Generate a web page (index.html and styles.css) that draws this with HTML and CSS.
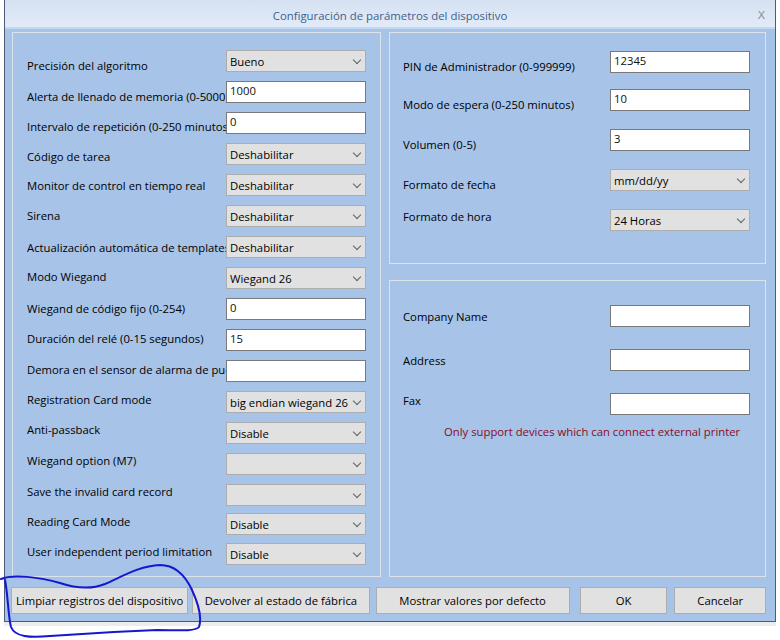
FILE: index.html
```html
<!DOCTYPE html>
<html lang="es">
<head>
    <meta charset="UTF-8">
    <title>Configuración de parámetros del dispositivo</title>
    <link rel="stylesheet" href="styles.css">
</head>
<body>

<div class="desktop">
    <div class="window">
        <div class="titlebar">
            <span></span>
            <span class="title">Configuración de parámetros del dispositivo</span>
            <span class="close">X</span>
        </div>

        <div class="client">
            <div class="panels">
                <div class="group group-left">
                    <div class="row"><span class="lbl d4">Precisión del algoritmo</span><div class="combo"><span class="val">Bueno</span></div></div>
                    <div class="row"><span class="lbl d4">Alerta de llenado de memoria (0-5000)</span><input class="field" type="text" value="1000"></div>
                    <div class="row"><span class="lbl d3">Intervalo de repetición (0-250 minutos)</span><input class="field" type="text" value="0"></div>
                    <div class="row"><span class="lbl d2">Código de tarea</span><div class="combo"><span class="val">Deshabilitar</span></div></div>
                    <div class="row"><span class="lbl">Monitor de control en tiempo real</span><div class="combo"><span class="val">Deshabilitar</span></div></div>
                    <div class="row"><span class="lbl u1">Sirena</span><div class="combo"><span class="val">Deshabilitar</span></div></div>
                    <div class="row"><span class="lbl">Actualización automática de templates</span><div class="combo"><span class="val">Deshabilitar</span></div></div>
                    <div class="row"><span class="lbl u2">Modo Wiegand</span><div class="combo"><span class="val">Wiegand 26</span></div></div>
                    <div class="row"><span class="lbl u1">Wiegand de código fijo (0-254)</span><input class="field" type="text" value="0"></div>
                    <div class="row"><span class="lbl u2">Duración del relé (0-15 segundos)</span><input class="field" type="text" value="15"></div>
                    <div class="row"><span class="lbl u2">Demora en el sensor de alarma de puerta</span><input class="field" type="text" value=""></div>
                    <div class="row"><span class="lbl u3">Registration Card mode</span><div class="combo"><span class="val">big endian wiegand 26</span></div></div>
                    <div class="row"><span class="lbl u4">Anti-passback</span><div class="combo"><span class="val">Disable</span></div></div>
                    <div class="row"><span class="lbl u4">Wiegand option (M7)</span><div class="combo"><span class="val"></span></div></div>
                    <div class="row"><span class="lbl u4">Save the invalid card record</span><div class="combo"><span class="val"></span></div></div>
                    <div class="row row-7"><span class="lbl u3">Reading Card Mode</span><div class="combo"><span class="val">Disable</span></div></div>
                    <div class="row row-8"><span class="lbl u3">User independent period limitation</span><div class="combo"><span class="val">Disable</span></div></div>
                </div>

                <div class="right-col">
                    <div class="group group-top">
                        <div class="row"><span class="lbl wide d4">PIN de Administrador (0-999999)</span><input class="field" type="text" value="12345"></div>
                        <div class="row"><span class="lbl wide d4">Modo de espera (0-250 minutos)</span><input class="field" type="text" value="10"></div>
                        <div class="row"><span class="lbl wide d4">Volumen (0-5)</span><input class="field" type="text" value="3"></div>
                        <div class="row"><span class="lbl wide d4">Formato de fecha</span><div class="combo"><span class="val">mm/dd/yy</span></div></div>
                        <div class="row"><span class="lbl wide u4">Formato de hora</span><div class="combo"><span class="val">24 Horas</span></div></div>
                    </div>
                    <div class="group group-bottom">
                        <div class="row"><span class="lbl wide">Company Name</span><input class="field" type="text" value=""></div>
                        <div class="row"><span class="lbl wide">Address</span><input class="field" type="text" value=""></div>
                        <div class="row"><span class="lbl wide u4">Fax</span><input class="field" type="text" value=""></div>
                        <p class="note">Only support devices which can connect external printer</p>
                    </div>
                </div>
            </div>

            <div class="buttons">
                <button class="btn btn-clear">Limpiar registros del dispositivo</button>
                <button class="btn btn-factory">Devolver al estado de fábrica</button>
                <button class="btn btn-default">Mostrar valores por defecto</button>
                <button class="btn btn-ok">OK</button>
                <button class="btn btn-cancel">Cancelar</button>
            </div>
        </div>
    </div>

    <!-- marca a mano sobre la captura -->
    <svg class="ink" width="780" height="640" viewBox="0 0 780 640">
        <path d="M1,579 C12,574 40,577 60,583 C75,588 90,590 105,584 C125,575 140,566 160,565 C175,565 185,575 192,590 C198,603 202,618 199,627 C195,632 175,630 157,630 C130,631 90,633 50,636 C30,638 15,637 11,627 C8,615 8,595 5,580"
              fill="none" stroke="#1616cf" stroke-width="2" stroke-linecap="round"/>
    </svg>
</div>

</body>
</html>
```

FILE: styles.css
```css
* {
    box-sizing: border-box;
}
body {
    margin: 0;
    background: #fff;
    font-family: "Open Sans", "Noto Sans", sans-serif;
    font-size: 11.3px;
    color: #000;
}
.desktop {
    position: relative;
    height: 640px;
    padding-left: 4px;
}
.window {
    width: 772px;
    border: 1px solid #4d5b75;
    border-top: none;
    background: #a7c3e8;
    box-shadow: 0 4px 0 #ededed;
}

/* barra de titulo */
.titlebar {
    height: 29px;
    padding-top: 3px;
    display: grid;
    grid-template-columns: 1fr auto 1fr;
    align-items: center;
    background: linear-gradient(#d5e1f2, #e2ebf8);
    border-bottom: 2px solid #c3d9f3;
}
.title {
    font-size: 11.4px;
    color: #3e5f8c;
}
.close {
    justify-self: end;
    margin-right: 10px;
    font-family: "Liberation Sans", sans-serif;
    font-size: 11px;
    color: #8a8a8a;
}

.client {
    padding: 3px 9px 7px 7px;
}
.panels {
    display: flex;
    gap: 8px;
    height: 545px;
}
.group {
    border: 1px solid #dde3ea;
}
.group-left {
    width: 369px;
    padding: 17px 14px 0 14px;
}
.right-col {
    width: 377px;
    display: flex;
    flex-direction: column;
    gap: 16px;
}
.group-top {
    height: 232px;
    padding: 18px 13px 0 13px;
}
.group-bottom {
    height: 297px;
    padding: 24px 13px 0 13px;
}

/* filas */
.row {
    display: flex;
    align-items: center;
    height: 22px;
}
.group-left .row + .row { margin-top: 9px; }
.group-left .row.row-7 { margin-top: 7px; }
.group-left .row.row-8 { margin-top: 8px; }
.group-top .row + .row { margin-top: 18px; }
.group-top .row:nth-child(2) { margin-top: 16px; }
.group-bottom .row + .row { margin-top: 22px; }

.lbl {
    width: 199px;
    flex-shrink: 0;
    overflow: hidden;
    white-space: nowrap;
    line-height: 16px;
    padding-top: 2px;
}
.lbl.wide { width: 207px; }

/* ajuste vertical del texto de las etiquetas */
.d2 { margin-top: 4px; }
.d3 { margin-top: 6px; }
.d4 { margin-top: 8px; }
.u1 { margin-bottom: 2px; }
.u2 { margin-bottom: 4px; }
.u3 { margin-bottom: 6px; }
.u4 { margin-bottom: 8px; }

.field {
    width: 140px;
    height: 22px;
    margin: 0;
    padding: 0 3px 4px 3px;
    border: 1px solid #7a7a7a;
    background: #fff;
    font: inherit;
    color: #111;
    outline: none;
}
.combo {
    width: 140px;
    height: 22px;
    display: flex;
    align-items: center;
    padding-left: 3px;
    border: 1px solid #adadad;
    background: #e1e1e1;
}
.combo .val {
    flex: 1;
    overflow: hidden;
    white-space: nowrap;
}
.combo::after {
    content: "";
    width: 5px;
    height: 5px;
    margin: -3px 5px 0 3px;
    border-right: 1px solid #606060;
    border-bottom: 1px solid #606060;
    transform: rotate(45deg);
}

.note {
    margin: 9px 0 0 0;
    padding-left: 41px;
    line-height: 16px;
    color: #8b0a1e;
}

/* botones */
.buttons {
    display: flex;
    margin: 10px 0 0 -1px;
}
.btn {
    height: 27px;
    padding: 0;
    border: 1px solid #adadad;
    background: #e1e1e1;
    font: inherit;
    color: #000;
}
.btn-clear { width: 178px; }
.btn-factory { width: 178px; margin-left: 4px; }
.btn-default { width: 195px; margin-left: 6px; }
.btn-ok { width: 88px; margin-left: 10px; }
.btn-cancel { width: 92px; margin-left: 7px; }

.ink {
    position: absolute;
    left: 0;
    top: 0;
    pointer-events: none;
}
```
